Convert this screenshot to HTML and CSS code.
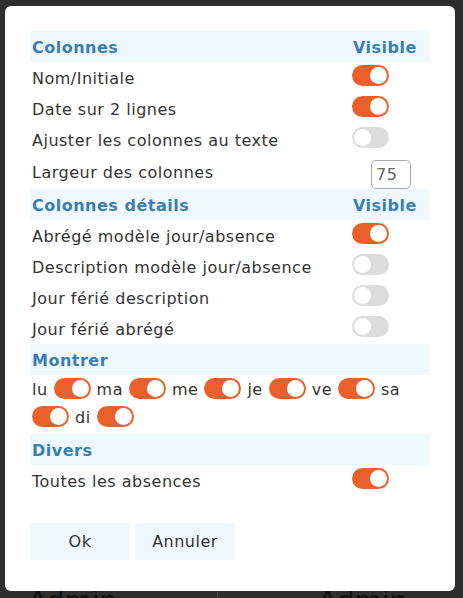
FILE: index.html
```html
<!DOCTYPE html>
<html lang="fr">
<head>
    <meta charset="UTF-8">
    <meta name="viewport" content="width=device-width, initial-scale=1.0">
    <title>Options</title>
    <link rel="stylesheet" href="styles.css">
</head>
<body>

    <div class="dialog">
        <div class="grid">
            <div class="head">Colonnes</div>
            <div class="head col2">Visible</div>

            <div class="cell">Nom/Initiale</div>
            <div class="cell col2"><span class="switch on"></span></div>
            <div class="cell">Date sur 2 lignes</div>
            <div class="cell col2"><span class="switch on"></span></div>
            <div class="cell">Ajuster les colonnes au texte</div>
            <div class="cell col2"><span class="switch"></span></div>
            <div class="cell tall">Largeur des colonnes</div>
            <div class="cell tall col2"><input class="num" type="text" value="75"></div>

            <div class="head">Colonnes détails</div>
            <div class="head col2">Visible</div>

            <div class="cell">Abrégé modèle jour/absence</div>
            <div class="cell col2"><span class="switch on"></span></div>
            <div class="cell">Description modèle jour/absence</div>
            <div class="cell col2"><span class="switch"></span></div>
            <div class="cell">Jour férié description</div>
            <div class="cell col2"><span class="switch"></span></div>
            <div class="cell">Jour férié abrégé</div>
            <div class="cell col2"><span class="switch"></span></div>
        </div>

        <div class="head full">Montrer</div>
        <div class="days">
            <span>lu</span><span class="switch on"></span>
            <span>ma</span><span class="switch on"></span>
            <span>me</span><span class="switch on"></span>
            <span>je</span><span class="switch on"></span>
            <span>ve</span><span class="switch on"></span>
            <span>sa</span><span class="switch on"></span>
            <span>di</span><span class="switch on"></span>
        </div>

        <div class="grid">
            <div class="head">Divers</div>
            <div class="head col2"></div>
            <div class="cell">Toutes les absences</div>
            <div class="cell col2"><span class="switch on"></span></div>
        </div>

        <div class="buttons">
            <button class="btn">Ok</button>
            <button class="btn">Annuler</button>
        </div>
    </div>

    <div class="behind">
        <div class="behind-cell">Admin</div>
        <div class="behind-cell">Admin</div>
    </div>

</body>
</html>
```

FILE: styles.css
```css
body {
    margin: 0;
    background: #2e2e2e;
    font-family: "DejaVu Sans", Verdana, sans-serif;
    font-size: 16px;
    letter-spacing: 0.5px;
    color: #333;
    height: 598px;
    overflow: hidden;
}
.dialog {
    box-sizing: border-box;
    width: 450px;
    height: 585px;
    margin: 6px 0 0 5px;
    padding: 25px 25px 0 25px;
    background: #fff;
    border-radius: 6px;
}
.grid {
    display: grid;
    grid-template-columns: 1fr 78px;
}
.head {
    height: 31px;
    line-height: 33px;
    padding-left: 2px;
    background: #eef8fd;
    color: #3b7db4;
    font-weight: bold;
}
.head.col2 {
    padding-left: 1px;
}
.cell {
    height: 31px;
    display: flex;
    align-items: center;
    padding-left: 2px;
    padding-top: 1px;
    box-sizing: border-box;
    white-space: nowrap;
}
.cell.col2 {
    padding-left: 0;
    padding-top: 0;
    padding-bottom: 4px;
}
.cell.tall {
    height: 34px;
    padding-bottom: 0;
}
.switch {
    display: inline-block;
    position: relative;
    width: 37px;
    height: 21px;
    border-radius: 11px;
    background: #dcdcdc;
    flex-shrink: 0;
}
.switch::after {
    content: "";
    position: absolute;
    top: 2px;
    left: 2px;
    width: 17px;
    height: 17px;
    border-radius: 50%;
    background: #fff;
}
.switch.on {
    background: #e9602b;
}
.switch.on::after {
    left: 18px;
}
.num {
    box-sizing: border-box;
    width: 40px;
    height: 29px;
    margin-left: 19px;
    margin-top: 4px;
    padding: 0 4px;
    border: 1px solid #aaa;
    border-radius: 5px;
    font-family: inherit;
    font-size: 16px;
    letter-spacing: 0.5px;
    color: #666;
}
.days {
    display: flex;
    flex-wrap: wrap;
    align-items: center;
    column-gap: 6px;
    row-gap: 4px;
    padding: 1px 0 6px 2px;
}
.days span:not(.switch) {
    line-height: 20px;
    padding-top: 4px;
}
.buttons {
    display: flex;
    gap: 5px;
    margin-top: 27px;
}
.btn {
    width: 100px;
    height: 37px;
    border: none;
    background: #eef8fd;
    font-family: inherit;
    font-size: 16px;
    letter-spacing: 0.5px;
    color: #333;
}
.behind {
    display: flex;
    height: 7px;
    overflow: hidden;
}
.behind-cell {
    padding-left: 100px;
    font-size: 28px;
    letter-spacing: 0;
    line-height: 40px;
    color: #111;
    margin-top: -9px;
}
.behind-cell:first-child {
    width: 189px;
    padding-left: 28px;
    border-right: 1px solid #444;
}
```
